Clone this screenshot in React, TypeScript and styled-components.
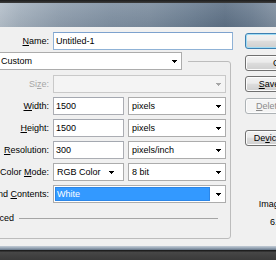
import React from "react";
import styled, { createGlobalStyle } from "styled-components";

const GlobalStyle = createGlobalStyle`
  html, body { margin: 0; padding: 0; }
  body {
    width: 276px;
    height: 260px;
    overflow: hidden;
    background: #3a3a3a;
    font-family: "Liberation Sans", Arial, sans-serif;
    font-size: 9px;
    color: #000;
  }
`;

const Window = styled.div`
  width: 276px;
  height: 260px;
  display: flex;
  flex-direction: column;
  overflow: hidden;
`;

const ScreenEdge = styled.div`
  flex: none;
  height: 3px;
  background: linear-gradient(#1c1c1c, #3d3d3d);
`;

const TitleBar = styled.div`
  flex: none;
  height: 24px;
  background:
    linear-gradient(180deg, rgba(255, 255, 255, 0.1), rgba(0, 0, 0, 0.04)),
    linear-gradient(90deg, #b4bfca 0px, #a3b0bd 20px, #8e9dad 60px, #7f90a2 110px,
      #7b8c9e 150px, #6b7e92 190px, #5d7085 225px, #6b7d91 252px, #7e8e9f 276px);
`;

const Client = styled.div`
  flex: 1;
  min-height: 0;
  display: flex;
  gap: 12px;
  padding-top: 5px;
  background: #f0f0f0;
`;

const Form = styled.div`
  flex: none;
  width: 297px;
  margin-left: -64px;
  display: flex;
  flex-direction: column;
`;

const Row = styled.div`
  display: flex;
  align-items: center;
  gap: 4px;
  height: 18px;
  flex: none;
`;

const Label = styled.label<{ $width: number; $disabled?: boolean }>`
  flex: none;
  width: ${(p) => p.$width}px;
  display: flex;
  justify-content: flex-end;
  white-space: nowrap;
  color: ${(p) => (p.$disabled ? "#a6a6a6" : "#000")};
`;

const TextField = styled.input<{ $width: number; $focus?: boolean }>`
  box-sizing: border-box;
  flex: none;
  width: ${(p) => p.$width}px;
  height: 18px;
  margin: 0;
  padding: 0 2px;
  font: inherit;
  color: #000;
  background: #fff;
  border: 1px solid ${(p) => (p.$focus ? "#8fb2d6" : "#abadb3")};
  border-top-color: ${(p) => (p.$focus ? "#7da2ce" : "#a4a8b0")};
  border-radius: 0;
  outline: none;
`;

const Select = styled.div<{ $width: number; $disabled?: boolean; $arrowRight?: number }>`
  box-sizing: border-box;
  flex: none;
  width: ${(p) => p.$width}px;
  height: 18px;
  display: flex;
  align-items: center;
  gap: 6px;
  padding-right: ${(p) => p.$arrowRight ?? 4}px;
  background: ${(p) => (p.$disabled ? "#f4f4f4" : "#fff")};
  border: 1px solid ${(p) => (p.$disabled ? "#c9c9c9" : "#acacac")};
  color: ${(p) => (p.$disabled ? "#a6a6a6" : "#000")};
  white-space: nowrap;
`;

const Value = styled.span<{ $selected?: boolean }>`
  flex: 1;
  min-width: 0;
  align-self: stretch;
  display: flex;
  align-items: center;
  padding-left: ${(p) => (p.$selected ? 2 : 3)}px;
  margin: ${(p) => (p.$selected ? "1px 0 1px 1px" : "0")};
  background: ${(p) => (p.$selected ? "#3399ff" : "transparent")};
  color: ${(p) => (p.$selected ? "#fff" : "inherit")};
  box-shadow: ${(p) => (p.$selected ? "inset 0 0 0 1px #2b86e8" : "none")};
`;

const Arrow = ({ color = "#000" }: { color?: string }) => (
  <svg width="5" height="3" viewBox="0 0 5 3" shapeRendering="crispEdges" style={{ flex: "none" }}>
    <rect x="0" y="0" width="5" height="1" fill={color} />
    <rect x="1" y="1" width="3" height="1" fill={color} />
    <rect x="2" y="2" width="1" height="1" fill={color} />
  </svg>
);

const Group = styled.fieldset`
  margin: 2px 2px 0 8px;
  padding: 5px 4px 13px 4px;
  border: 1px solid #bcbcbc;
  border-radius: 3px;
  min-width: 0;
  display: flex;
  flex-direction: column;
  gap: 4px;
`;

const Legend = styled.legend`
  padding: 0 6px 0 0;
  margin: 0;
`;

const AdvancedRow = styled.div`
  display: flex;
  align-items: center;
  height: 14px;
  flex: none;
  gap: 5px;
  margin-top: 4px;
  padding: 0 8px 0 6px;
  white-space: nowrap;
`;

const Toggle = styled.span`
  flex: none;
  width: 14px;
  height: 14px;
  box-sizing: border-box;
  border: 1px solid #8a8a8a;
  border-radius: 50%;
  background: linear-gradient(#ffffff, #dcdcdc);
`;

const Rule = styled.div`
  flex: 1;
  height: 1px;
  background: #a5a5a5;
`;

const ButtonColumn = styled.div`
  flex: none;
  width: 84px;
  padding-top: 1px;
  display: flex;
  flex-direction: column;
  gap: 5.5px;
`;

const Button = styled.button<{ $primary?: boolean; $disabled?: boolean; $gapBefore?: number }>`
  box-sizing: border-box;
  flex: none;
  height: 16px;
  margin: ${(p) => p.$gapBefore ?? 0}px 0 0 0;
  padding: 0;
  font: inherit;
  white-space: nowrap;
  color: ${(p) => (p.$disabled ? "#8a8a8a" : "#000")};
  border: 1px solid ${(p) => (p.$primary ? "#3c7fb1" : p.$disabled ? "#adb2b5" : "#707070")};
  border-radius: 3px;
  background: ${(p) =>
    p.$disabled
      ? "#f4f4f4"
      : "linear-gradient(#f2f2f2 0%, #ebebeb 45%, #dddddd 50%, #cfcfcf 100%)"};
  box-shadow: inset 0 0 0 1px ${(p) => (p.$primary ? "#9fdcf5" : "#fcfcfc")};
  text-align: center;
`;

const Info = styled.div`
  flex: none;
  width: 75px;
  margin-top: 47.5px;
  display: flex;
  flex-direction: column;
  align-items: center;
  gap: 7px;
  line-height: 11px;
  white-space: nowrap;
`;

const BottomFrame = styled.div`
  flex: none;
  height: 4px;
  background: linear-gradient(#c3ccd6, #9aa8b7 50%, #66768a);
`;

const Desktop = styled.div`
  flex: none;
  height: 10px;
  background: linear-gradient(#1e1e1e 0px, #1e1e1e 1px, #474747 2px, #3a3a3a 10px);
`;

export default function App() {
  return (
    <>
      <GlobalStyle />
      <Window>
        <ScreenEdge />
        <TitleBar />
        <Client>
          <Form>
            <Row>
              <Label $width={113}>
                <span><u>N</u>ame:</span>
              </Label>
              <TextField $width={180} $focus readOnly defaultValue="Untitled-1" />
            </Row>
            <Group>
              <Legend>
                <Row>
                  <Label $width={44}>
                    <span><u>P</u>reset:</span>
                  </Label>
                  <Select $width={185}>
                    <Value>Custom</Value>
                    <Arrow />
                  </Select>
                </Row>
              </Legend>
              <Row>
                <Label $width={100} $disabled>
                  <span>Si<u>z</u>e:</span>
                </Label>
                <Select $width={173} $disabled>
                  <Value />
                  <Arrow color="#a6a6a6" />
                </Select>
              </Row>
              <Row>
                <Label $width={100}>
                  <span><u>W</u>idth:</span>
                </Label>
                <TextField $width={71} readOnly defaultValue="1500" />
                <Select $width={98}>
                  <Value>pixels</Value>
                  <Arrow />
                </Select>
              </Row>
              <Row>
                <Label $width={100}>
                  <span><u>H</u>eight:</span>
                </Label>
                <TextField $width={71} readOnly defaultValue="1500" />
                <Select $width={98}>
                  <Value>pixels</Value>
                  <Arrow />
                </Select>
              </Row>
              <Row>
                <Label $width={100}>
                  <span><u>R</u>esolution:</span>
                </Label>
                <TextField $width={71} readOnly defaultValue="300" />
                <Select $width={98}>
                  <Value>pixels/inch</Value>
                  <Arrow />
                </Select>
              </Row>
              <Row>
                <Label $width={100}>
                  <span>Color <u>M</u>ode:</span>
                </Label>
                <Select $width={71} $arrowRight={9}>
                  <Value>RGB Color</Value>
                  <Arrow />
                </Select>
                <Select $width={98}>
                  <Value>8 bit</Value>
                  <Arrow />
                </Select>
              </Row>
              <Row>
                <Label $width={100}>
                  <span>Background <u>C</u>ontents:</span>
                </Label>
                <Select $width={173}>
                  <Value $selected>White</Value>
                  <Arrow />
                </Select>
              </Row>
              <AdvancedRow>
                <Toggle />
                <span>Advanced</span>
                <Rule />
              </AdvancedRow>
            </Group>
          </Form>
          <ButtonColumn>
            <Button $primary>OK</Button>
            <Button>Cancel</Button>
            <Button><u>S</u>ave Preset...</Button>
            <Button $disabled><u>D</u>elete Preset...</Button>
            <Button $gapBefore={11}>De<u>v</u>ice Central...</Button>
            <Info>
              <span>Image Size:</span>
              <span>6.44M</span>
            </Info>
          </ButtonColumn>
        </Client>
        <BottomFrame />
        <Desktop />
      </Window>
    </>
  );
}
